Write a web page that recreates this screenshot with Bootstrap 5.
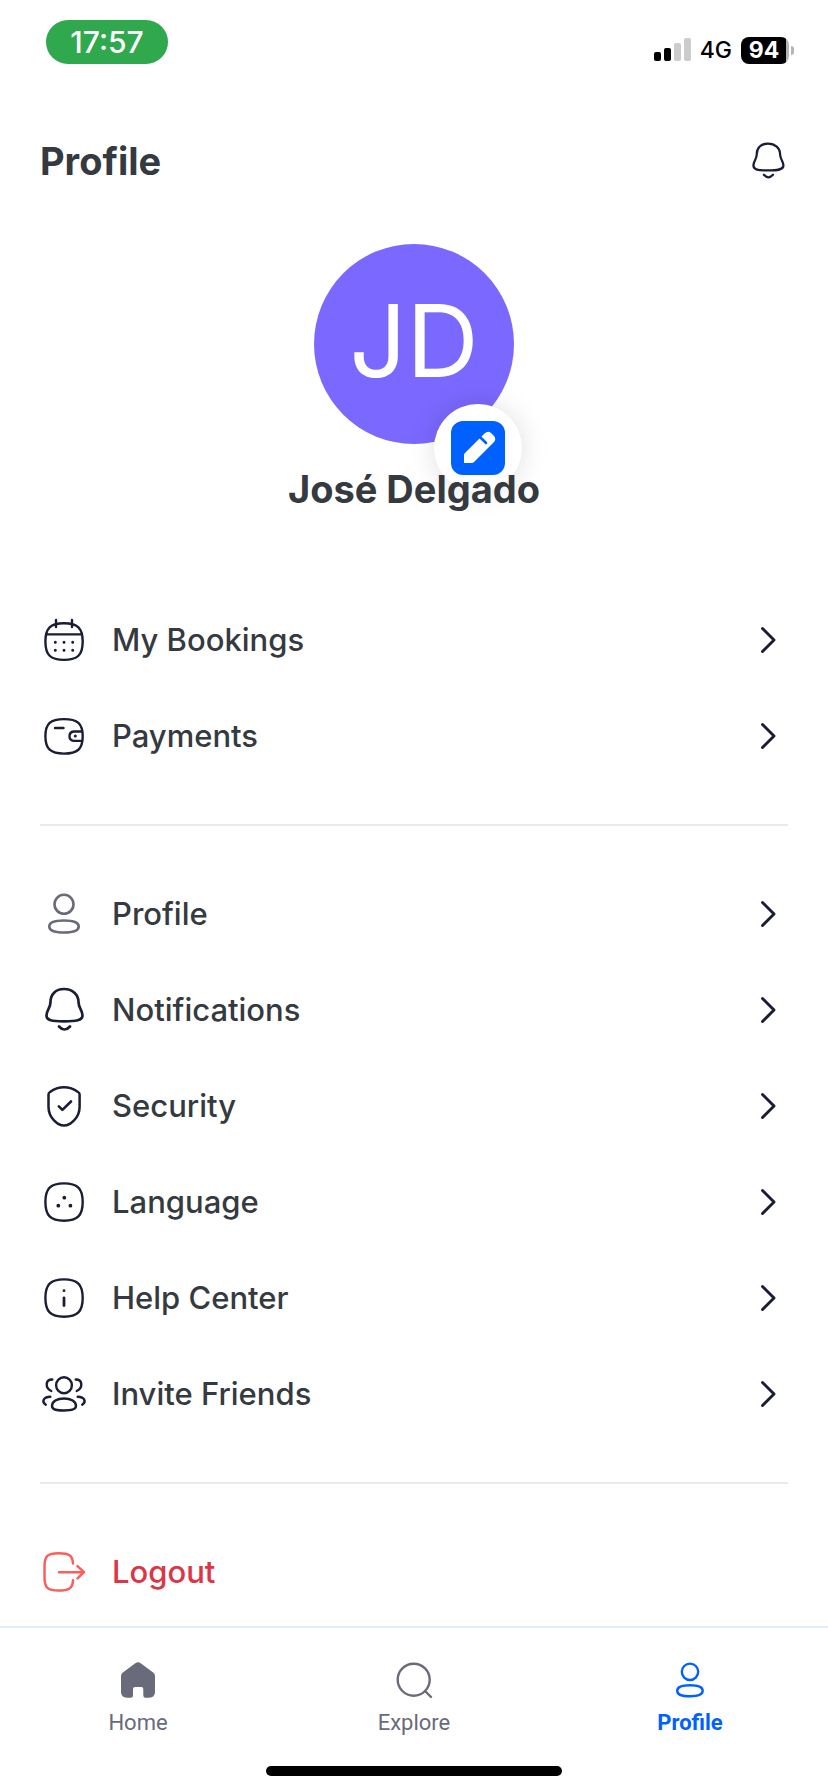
<!DOCTYPE html>
<html lang="en">
<head>
<meta charset="utf-8">
<meta name="viewport" content="width=device-width, initial-scale=1">
<title>Profile</title>
<link href="https://cdn.jsdelivr.net/npm/bootstrap@5.3.0/dist/css/bootstrap.min.css" rel="stylesheet">
<style>
  body { font-family: Inter, "Liberation Sans", sans-serif; color: #343a40; background: #fff; }
  svg { fill: none; stroke: currentColor; stroke-linecap: round; stroke-linejoin: round; flex: none; display: block; }
  .fill-icon { fill: currentColor; stroke: none; }
  .status-bar { height: 100px; padding: 20px 39px 0 46px; color: #000; }
  .clock { width: 122px; height: 44px; background: #30a84e; color: #fff; font-size: 30px; line-height: 45px; font-weight: 500; }
  .signals { height: 28px; margin-top: 16px; gap: 9px; font-size: 23px; line-height: 28px; font-weight: 500; }
  .signals svg { stroke: none; }
  .battery { width: 48px; height: 27px; border-radius: 8px; background: linear-gradient(90deg, #000 45px, #b5b5b5 45px); color: #fff; font-size: 23px; line-height: 27px; font-weight: 700; padding-right: 2px; }
  .battery::after { content: ""; position: absolute; left: 50px; top: 9px; width: 3px; height: 9px; border-radius: 0 5px 5px 0; background: #b5b5b5; }
  .page-x { padding-left: 40px; padding-right: 40px; }
  .top-row { padding-top: 40px; }
  .heading { font-size: 38px; line-height: 42px; font-weight: 700; }
  .ink { color: #191d36; }
  .slate { color: #696a7a; }
  .avatar { width: 200px; height: 200px; margin-top: 62px; padding-bottom: 6px; background: #7b68ff; color: #fff; font-size: 100px; font-weight: 400; }
  .edit-btn { left: 120px; top: 160px; width: 88px; height: 88px; box-shadow: 0 0 28px rgba(0,0,0,.13); }
  .edit-btn svg { stroke: none; }
  .person { margin-top: 24px; margin-bottom: 82px; position: relative; z-index: 2; pointer-events: none; }
  .menu-row { height: 96px; gap: 24px; font-size: 31px; line-height: 40px; font-weight: 500; color: #343a40; }
  .rule { height: 2px; margin: 40px 0; background: #e7ebef; }
  .logout { color: #dc3545; }
  .coral { color: #ff5c5c; }
  .tab-bar { border-top: 2px solid #e2edfb; height: 166px; padding-top: 32px; font-family: Roboto, sans-serif; font-size: 22px; line-height: 26px; }
  .tab-bar a { gap: 10px; }
  .tab-on { color: #0061ff; font-weight: 700; }
  .home-line { width: 296px; height: 10px; background: #000; margin-bottom: 16px; }
</style>
</head>
<body>
<svg width="0" height="0" class="position-absolute" aria-hidden="true">
  <symbol id="bell" viewBox="0 0 48 48"><path d="M24 3C15.500 3 10.500 8.500 10.500 16C10.500 22 6.500 24 6.500 29.500C6.500 34.500 12 35.300 24 35.300S42.500 34.500 42.500 29.500C42.500 24 38.500 22 38.500 16C38.500 8.500 32.500 3 24 3ZM19 40.500Q24.500 46.500 30 40.500"/></symbol>
  <symbol id="squircle" viewBox="0 0 48 48"><path d="M24 5.400C37.500 5.400 42.700 10.500 42.700 24S37.500 42.700 24 42.700S5.400 37.500 5.400 24S10.500 5.400 24 5.400Z"/></symbol>
  <symbol id="go" viewBox="0 0 48 48"><path d="M22.500 12.500L34 24L22.500 35.500"/></symbol>
</svg>
<div class="d-flex flex-column min-vh-100">
  <div class="status-bar d-flex justify-content-between align-items-start">
    <div class="clock rounded-pill text-center">17:57</div>
    <div class="signals d-flex align-items-center">
      <svg width="37" height="24" viewBox="0 0 37 24"><g fill="#000"><rect y="14" width="7" height="9" rx="2"/><rect x="10" y="10" width="7" height="13" rx="2"/></g><g fill="#ccc"><rect x="20" y="5" width="7" height="18" rx="2"/><rect x="30" width="7" height="23" rx="2"/></g></svg>
      <span>4G</span>
      <div class="battery position-relative text-center">94</div>
    </div>
  </div>

  <header class="top-row page-x d-flex justify-content-between align-items-center">
    <h1 class="heading mb-0">Profile</h1>
    <button type="button" class="btn p-0 border-0 ink" aria-label="Notifications"><svg width="40" height="40" stroke-width="2.700"><use href="#bell"/></svg></button>
  </header>

  <main class="page-x flex-grow-1">
    <div class="d-flex flex-column align-items-center">
      <div class="avatar rounded-circle position-relative d-flex align-items-center justify-content-center">JD
        <button type="button" class="edit-btn btn border-0 bg-white rounded-circle position-absolute p-0 d-flex align-items-center justify-content-center" aria-label="Edit picture">
          <svg width="54" height="54" viewBox="0 0 54 54"><rect width="54" height="54" rx="12" fill="#0061ff"/><path fill="#fff" d="M13 42V34Q13 33 14 32L33.500 12.500Q37 9.500 40 12L43 15Q45.500 18 43 21L23 41Q22 42 21 42Z"/><path stroke="#0061ff" stroke-width="2.600" d="M29 16L35 22"/></svg>
        </button>
      </div>
      <h2 class="heading person">José Delgado</h2>
    </div>

    <nav aria-label="Account">
      <a href="#" class="menu-row d-flex align-items-center text-decoration-none">
        <svg class="ink" width="48" height="48" viewBox="0 0 48 48" stroke-width="2.400"><path d="M24 7.200C37.500 7.200 42.700 12 42.700 25.500S37.500 43.900 24 43.900S5.400 39 5.400 25.500S10.500 7.200 24 7.200ZM6.500 18.400H41.500M16 4V11M32 4V11"/><path stroke-width="3" d="M15.300 26.300h.01M24 26.300h.01M32.700 26.300h.01M15.300 34.300h.01M24 34.300h.01M32.700 34.300h.01"/></svg>
        <span class="flex-grow-1">My Bookings</span><svg class="ink" width="48" height="48" stroke-width="2.900"><use href="#go"/></svg></a>
      <a href="#" class="menu-row d-flex align-items-center text-decoration-none">
        <svg class="ink" width="48" height="48" viewBox="0 0 48 48" stroke-width="2.400"><path d="M24 7.100C37.500 7.100 42.700 11.500 42.700 24.300S37.500 41.600 24 41.600S5.400 37 5.400 24.300S10.500 7.100 24 7.100ZM42.200 19.500H34.500Q29.500 19.500 29.500 24.200T34.500 28.900H42.200M15 16H23.500"/><path stroke-width="3" d="M35.300 24h.01"/></svg>
        <span class="flex-grow-1">Payments</span><svg class="ink" width="48" height="48" stroke-width="2.900"><use href="#go"/></svg></a>
    </nav>
    <div class="rule"></div>
    <nav aria-label="Settings">
      <a href="#" class="menu-row d-flex align-items-center text-decoration-none">
        <svg class="slate" width="48" height="48" viewBox="0 0 48 48" stroke-width="2.600"><circle cx="24" cy="14.300" r="9.500"/><path d="M24 30.500C34 30.500 38.700 32 38.700 36.500S34 42.500 24 42.500S9.300 41 9.300 36.500S14 30.500 24 30.500Z"/></svg>
        <span class="flex-grow-1">Profile</span><svg class="ink" width="48" height="48" stroke-width="2.900"><use href="#go"/></svg></a>
      <a href="#" class="menu-row d-flex align-items-center text-decoration-none">
        <svg class="ink" width="48" height="48" stroke-width="2.700"><use href="#bell"/></svg>
        <span class="flex-grow-1">Notifications</span><svg class="ink" width="48" height="48" stroke-width="2.900"><use href="#go"/></svg></a>
      <a href="#" class="menu-row d-flex align-items-center text-decoration-none">
        <svg class="ink" width="48" height="48" viewBox="0 0 48 48" stroke-width="2.500"><path d="M8.500 12.500Q8.500 10.800 10 10Q16.500 5.300 24 5.300T38 10Q39.600 10.800 39.600 12.500V25C39.600 36 30 43.500 24 43.500S8.500 36 8.500 25Z"/><path stroke-width="2.600" d="M18.800 24.300L22.400 27.900L31 19.500"/></svg>
        <span class="flex-grow-1">Security</span><svg class="ink" width="48" height="48" stroke-width="2.900"><use href="#go"/></svg></a>
      <a href="#" class="menu-row d-flex align-items-center text-decoration-none">
        <svg class="ink" width="48" height="48" viewBox="0 0 48 48" stroke-width="2.400"><use href="#squircle"/><path stroke-width="3.800" d="M24.300 19.700h.01M18.300 27.700h.01M30.400 27.700h.01"/></svg>
        <span class="flex-grow-1">Language</span><svg class="ink" width="48" height="48" stroke-width="2.900"><use href="#go"/></svg></a>
      <a href="#" class="menu-row d-flex align-items-center text-decoration-none">
        <svg class="ink" width="48" height="48" viewBox="0 0 48 48" stroke-width="2.400"><use href="#squircle"/><path stroke-width="2.800" d="M24 16.700h.01M24 24V31.500"/></svg>
        <span class="flex-grow-1">Help Center</span><svg class="ink" width="48" height="48" stroke-width="2.900"><use href="#go"/></svg></a>
      <a href="#" class="menu-row d-flex align-items-center text-decoration-none">
        <svg class="ink" width="48" height="48" viewBox="0 0 48 48" stroke-width="2.400"><ellipse cx="24" cy="15.300" rx="7.900" ry="8"/><path d="M24 28.500C31 28.500 36 31.500 36 36C36 39.500 32 40.500 24 40.500S12 39.500 12 36C12 31.500 17 28.500 24 28.500ZM12.300 9.500C5 9.500 5 18 11.300 21M35.700 9.500C43 9.500 43 18 36.700 21M10.300 26.800C3 27 1.500 32 5.800 34.700M37.700 26.800C45 27 46.500 32 42.200 34.700"/></svg>
        <span class="flex-grow-1">Invite Friends</span><svg class="ink" width="48" height="48" stroke-width="2.900"><use href="#go"/></svg></a>
    </nav>
    <div class="rule"></div>
    <a href="#" class="menu-row logout d-flex align-items-center text-decoration-none">
      <svg class="coral" width="48" height="48" viewBox="0 0 48 48" stroke-width="2.500"><path d="M33 15.500C32.500 7.500 29 5.200 18.500 5.200C7.500 5.200 4.500 8 4.500 19V29C4.500 40 7.500 42.600 18.500 42.600C29 42.600 32.500 40.500 33 32.300M19 24.200H44M37.500 18.200L44 24.200L37.500 30.400"/></svg>
      <span>Logout</span></a>
  </main>

  <footer class="tab-bar bg-white d-flex flex-column justify-content-between">
    <nav class="row g-0" aria-label="Main">
      <a href="#" class="col d-flex flex-column align-items-center text-decoration-none slate"><svg class="fill-icon" width="40" height="40" viewBox="0 0 40 40"><path d="M17.300 3.200Q20 1.200 22.700 3.200L35.500 12.700Q37 14 37 16V32Q37 37.700 31 37.700H27.500Q25.300 37.700 25.300 35.500V29Q25.300 27 23.300 27H17Q15 27 15 29V35.500Q15 37.700 12.800 37.700H9Q3 37.700 3 32V16Q3 14 4.500 12.700Z"/></svg><span>Home</span></a>
      <a href="#" class="col d-flex flex-column align-items-center text-decoration-none slate"><svg width="40" height="40" viewBox="0 0 40 40" stroke-width="2.400"><circle cx="19.700" cy="19.700" r="16"/><path d="M31 31L37 37"/></svg><span>Explore</span></a>
      <a href="#" class="col d-flex flex-column align-items-center text-decoration-none tab-on" aria-current="page"><svg width="40" height="40" viewBox="0 0 40 40" stroke-width="2.400"><circle cx="20" cy="11.800" r="8.200"/><path d="M20 25.300C28.500 25.300 32.700 26.700 32.700 30.800S28.500 36.200 20 36.200S7.200 34.900 7.200 30.800S11.500 25.300 20 25.300Z"/></svg><span>Profile</span></a>
    </nav>
    <div class="home-line rounded-pill mx-auto"></div>
  </footer>
</div>
<script src="https://cdn.jsdelivr.net/npm/bootstrap@5.3.0/dist/js/bootstrap.bundle.min.js"></script>
</body>
</html>
